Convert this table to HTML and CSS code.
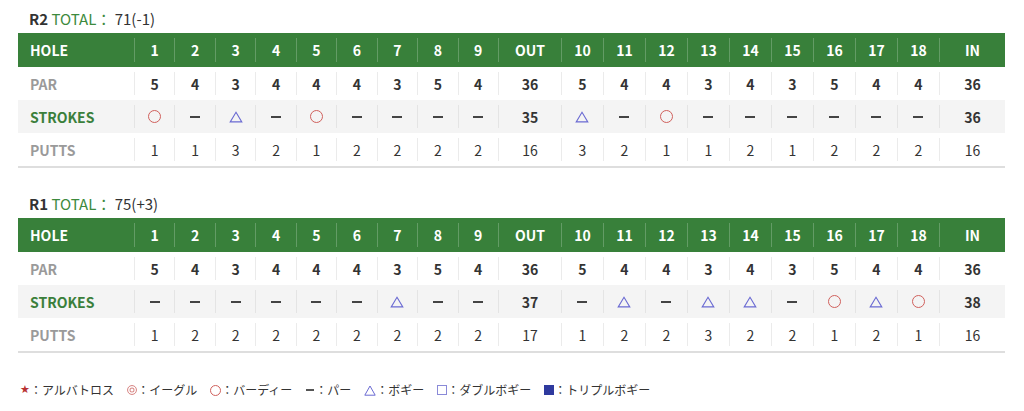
FILE: index.html
```html
<!DOCTYPE html>
<html lang="ja">
<head>
<meta charset="utf-8">
<title>Score</title>
<link rel="stylesheet" href="styles.css">
</head>
<body>
<div class="page">
  <section class="round">
    <h2 class="rtitle"><b>R2</b> <span class="tot">TOTAL：</span> 71(-1)</h2>
    <table class="score">
      <colgroup>
        <col class="w-label">
        <col class="w-a"><col class="w-a"><col class="w-a"><col class="w-a"><col class="w-a"><col class="w-a"><col class="w-a"><col class="w-a"><col class="w-a">
        <col class="w-out">
        <col class="w-b"><col class="w-b"><col class="w-b"><col class="w-b"><col class="w-b"><col class="w-b"><col class="w-b"><col class="w-b"><col class="w-b">
        <col class="w-in">
      </colgroup>
      <tr class="head">
        <th class="lab"><div>HOLE</div></th>
        <th><div>1</div></th><th><div>2</div></th><th><div>3</div></th><th><div>4</div></th><th><div>5</div></th><th><div>6</div></th><th><div>7</div></th><th><div>8</div></th><th><div>9</div></th>
        <th><div>OUT</div></th>
        <th><div>10</div></th><th><div>11</div></th><th><div>12</div></th><th><div>13</div></th><th><div>14</div></th><th><div>15</div></th><th><div>16</div></th><th><div>17</div></th><th><div>18</div></th>
        <th><div>IN</div></th>
      </tr>
      <tr class="par">
        <td class="lab"><div>PAR</div></td>
        <td><div>5</div></td><td><div>4</div></td><td><div>3</div></td><td><div>4</div></td><td><div>4</div></td><td><div>4</div></td><td><div>3</div></td><td><div>5</div></td><td><div>4</div></td>
        <td><div>36</div></td>
        <td><div>5</div></td><td><div>4</div></td><td><div>4</div></td><td><div>3</div></td><td><div>4</div></td><td><div>3</div></td><td><div>5</div></td><td><div>4</div></td><td><div>4</div></td>
        <td><div>36</div></td>
      </tr>
      <tr class="strokes">
        <td class="lab"><div>STROKES</div></td>
        <td><div><i class="bird"></i></div></td>
        <td><div><i class="dash"></i></div></td>
        <td><div><svg class="tri" viewBox="0 0 14 12"><path d="M7 1.2 L12.8 10.9 H1.2 Z"/></svg></div></td>
        <td><div><i class="dash"></i></div></td>
        <td><div><i class="bird"></i></div></td>
        <td><div><i class="dash"></i></div></td>
        <td><div><i class="dash"></i></div></td>
        <td><div><i class="dash"></i></div></td>
        <td><div><i class="dash"></i></div></td>
        <td class="tot-cell"><div>35</div></td>
        <td><div><svg class="tri" viewBox="0 0 14 12"><path d="M7 1.2 L12.8 10.9 H1.2 Z"/></svg></div></td>
        <td><div><i class="dash"></i></div></td>
        <td><div><i class="bird"></i></div></td>
        <td><div><i class="dash"></i></div></td>
        <td><div><i class="dash"></i></div></td>
        <td><div><i class="dash"></i></div></td>
        <td><div><i class="dash"></i></div></td>
        <td><div><i class="dash"></i></div></td>
        <td><div><i class="dash"></i></div></td>
        <td class="tot-cell"><div>36</div></td>
      </tr>
      <tr class="putts">
        <td class="lab"><div>PUTTS</div></td>
        <td><div>1</div></td><td><div>1</div></td><td><div>3</div></td><td><div>2</div></td><td><div>1</div></td><td><div>2</div></td><td><div>2</div></td><td><div>2</div></td><td><div>2</div></td>
        <td><div>16</div></td>
        <td><div>3</div></td><td><div>2</div></td><td><div>1</div></td><td><div>1</div></td><td><div>2</div></td><td><div>1</div></td><td><div>2</div></td><td><div>2</div></td><td><div>2</div></td>
        <td><div>16</div></td>
      </tr>
    </table>
  </section>

  <section class="round second">
    <h2 class="rtitle"><b>R1</b> <span class="tot">TOTAL：</span> 75(+3)</h2>
    <table class="score">
      <colgroup>
        <col class="w-label">
        <col class="w-a"><col class="w-a"><col class="w-a"><col class="w-a"><col class="w-a"><col class="w-a"><col class="w-a"><col class="w-a"><col class="w-a">
        <col class="w-out">
        <col class="w-b"><col class="w-b"><col class="w-b"><col class="w-b"><col class="w-b"><col class="w-b"><col class="w-b"><col class="w-b"><col class="w-b">
        <col class="w-in">
      </colgroup>
      <tr class="head">
        <th class="lab"><div>HOLE</div></th>
        <th><div>1</div></th><th><div>2</div></th><th><div>3</div></th><th><div>4</div></th><th><div>5</div></th><th><div>6</div></th><th><div>7</div></th><th><div>8</div></th><th><div>9</div></th>
        <th><div>OUT</div></th>
        <th><div>10</div></th><th><div>11</div></th><th><div>12</div></th><th><div>13</div></th><th><div>14</div></th><th><div>15</div></th><th><div>16</div></th><th><div>17</div></th><th><div>18</div></th>
        <th><div>IN</div></th>
      </tr>
      <tr class="par">
        <td class="lab"><div>PAR</div></td>
        <td><div>5</div></td><td><div>4</div></td><td><div>3</div></td><td><div>4</div></td><td><div>4</div></td><td><div>4</div></td><td><div>3</div></td><td><div>5</div></td><td><div>4</div></td>
        <td><div>36</div></td>
        <td><div>5</div></td><td><div>4</div></td><td><div>4</div></td><td><div>3</div></td><td><div>4</div></td><td><div>3</div></td><td><div>5</div></td><td><div>4</div></td><td><div>4</div></td>
        <td><div>36</div></td>
      </tr>
      <tr class="strokes">
        <td class="lab"><div>STROKES</div></td>
        <td><div><i class="dash"></i></div></td>
        <td><div><i class="dash"></i></div></td>
        <td><div><i class="dash"></i></div></td>
        <td><div><i class="dash"></i></div></td>
        <td><div><i class="dash"></i></div></td>
        <td><div><i class="dash"></i></div></td>
        <td><div><svg class="tri" viewBox="0 0 14 12"><path d="M7 1.2 L12.8 10.9 H1.2 Z"/></svg></div></td>
        <td><div><i class="dash"></i></div></td>
        <td><div><i class="dash"></i></div></td>
        <td class="tot-cell"><div>37</div></td>
        <td><div><i class="dash"></i></div></td>
        <td><div><svg class="tri" viewBox="0 0 14 12"><path d="M7 1.2 L12.8 10.9 H1.2 Z"/></svg></div></td>
        <td><div><i class="dash"></i></div></td>
        <td><div><svg class="tri" viewBox="0 0 14 12"><path d="M7 1.2 L12.8 10.9 H1.2 Z"/></svg></div></td>
        <td><div><svg class="tri" viewBox="0 0 14 12"><path d="M7 1.2 L12.8 10.9 H1.2 Z"/></svg></div></td>
        <td><div><i class="dash"></i></div></td>
        <td><div><i class="bird"></i></div></td>
        <td><div><svg class="tri" viewBox="0 0 14 12"><path d="M7 1.2 L12.8 10.9 H1.2 Z"/></svg></div></td>
        <td><div><i class="bird"></i></div></td>
        <td class="tot-cell"><div>38</div></td>
      </tr>
      <tr class="putts">
        <td class="lab"><div>PUTTS</div></td>
        <td><div>1</div></td><td><div>2</div></td><td><div>2</div></td><td><div>2</div></td><td><div>2</div></td><td><div>2</div></td><td><div>2</div></td><td><div>2</div></td><td><div>2</div></td>
        <td><div>17</div></td>
        <td><div>1</div></td><td><div>2</div></td><td><div>2</div></td><td><div>3</div></td><td><div>2</div></td><td><div>2</div></td><td><div>1</div></td><td><div>2</div></td><td><div>1</div></td>
        <td><div>16</div></td>
      </tr>
    </table>
  </section>

  <ul class="legend">
    <li><span class="lg-star">★</span>：アルバトロス</li>
    <li><i class="lg-eagle"></i>：イーグル</li>
    <li><i class="lg-bird"></i>：バーディー</li>
    <li><i class="lg-dash"></i>：パー</li>
    <li><svg class="lg-tri" viewBox="0 0 12 11"><path d="M6 1 L11.2 10.2 H0.8 Z"/></svg>：ボギー</li>
    <li><i class="lg-sq"></i>：ダブルボギー</li>
    <li><i class="lg-fsq"></i>：トリプルボギー</li>
  </ul>
</div>
</body>
</html>
```

FILE: styles.css
```css
* { box-sizing: border-box; }

body {
  margin: 0;
  background: #ffffff;
  font-family: "Noto Sans CJK JP", "Noto Sans", sans-serif;
  color: #333333;
}

.page {
  padding: 8px 19px 0 18px;
}

.round.second {
  margin-top: 25px;
}

.rtitle {
  margin: 0 0 3px 11px;
  font-size: 15px;
  line-height: 22px;
  font-weight: 400;
  color: #333333;
}

.rtitle b {
  font-weight: 700;
}

.rtitle .tot {
  color: #3d8a3d;
}

.score {
  width: 987px;
  table-layout: fixed;
  border-collapse: collapse;
  border-spacing: 0;
  border-bottom: 2px solid #dedede;
}

.w-label { width: 116px; }
.w-a { width: 40.44px; }
.w-out { width: 63px; }
.w-b { width: 42px; }
.w-in { width: 66px; }

.score th,
.score td {
  padding: 5px 0;
  text-align: center;
  font-size: 14px;
}

.score th > div,
.score td > div {
  display: flex;
  align-items: center;
  justify-content: center;
  height: 23px;
  border-left: 1px solid #ebebeb;
}

.score .lab > div {
  justify-content: flex-start;
  padding-left: 12px;
  border-left: 0;
}

.head {
  background: #38803a;
  color: #ffffff;
}

.head th {
  font-weight: 700;
  height: 34px;
}

.head th > div {
  height: 24px;
  border-left-color: rgba(255, 255, 255, 0.22);
}

.head .lab > div {
  border-left: 0;
}

.par td,
.strokes td,
.putts td {
  height: 33px;
}

.par td {
  font-weight: 700;
  color: #333333;
}

.strokes {
  background: #f4f4f4;
}

.strokes td > div {
  border-left-color: #e4e4e4;
}

.strokes .tot-cell {
  font-weight: 700;
  color: #333333;
}

.putts td {
  font-weight: 400;
  color: #333333;
}

.par .lab,
.putts .lab {
  color: #9a9a9a;
  font-weight: 700;
}

.strokes .lab {
  color: #3b7f3b;
  font-weight: 700;
}

.bird {
  display: block;
  width: 13px;
  height: 13px;
  border: 1px solid #d0605c;
  border-radius: 50%;
}

.dash {
  display: block;
  width: 10px;
  height: 2px;
  background: #444444;
}

.tri {
  display: block;
  width: 14px;
  height: 12px;
}

.tri path {
  fill: none;
  stroke: #6a6ad2;
  stroke-width: 1.1;
}

.legend {
  list-style: none;
  margin: 27px 0 0 2px;
  padding: 0;
  display: flex;
  gap: 13px;
  font-size: 12px;
  line-height: 20px;
  color: #333333;
}

.legend li {
  display: flex;
  align-items: center;
}

.lg-star {
  color: #b83232;
  font-size: 11px;
  line-height: 12px;
  display: inline-block;
  font-family: "DejaVu Sans", sans-serif;
}

.lg-eagle {
  display: block;
  width: 10px;
  height: 10px;
  border: 1px solid #d98a88;
  border-radius: 50%;
  box-shadow: inset 0 0 0 1.5px #ffffff, inset 0 0 0 2.5px #d98a88;
}

.lg-bird {
  display: block;
  width: 11px;
  height: 11px;
  border: 1px solid #d0605c;
  border-radius: 50%;
}

.lg-dash {
  display: block;
  width: 8px;
  height: 1.5px;
  background: #555555;
  margin: 0 1px;
}

.lg-tri {
  display: block;
  width: 12px;
  height: 11px;
}

.lg-tri path {
  fill: none;
  stroke: #6a6ad2;
  stroke-width: 1;
}

.lg-sq {
  display: block;
  width: 10px;
  height: 10px;
  border: 1px solid #8a8ad8;
}

.lg-fsq {
  display: block;
  width: 10px;
  height: 10px;
  background: #2f3a9e;
}
```
